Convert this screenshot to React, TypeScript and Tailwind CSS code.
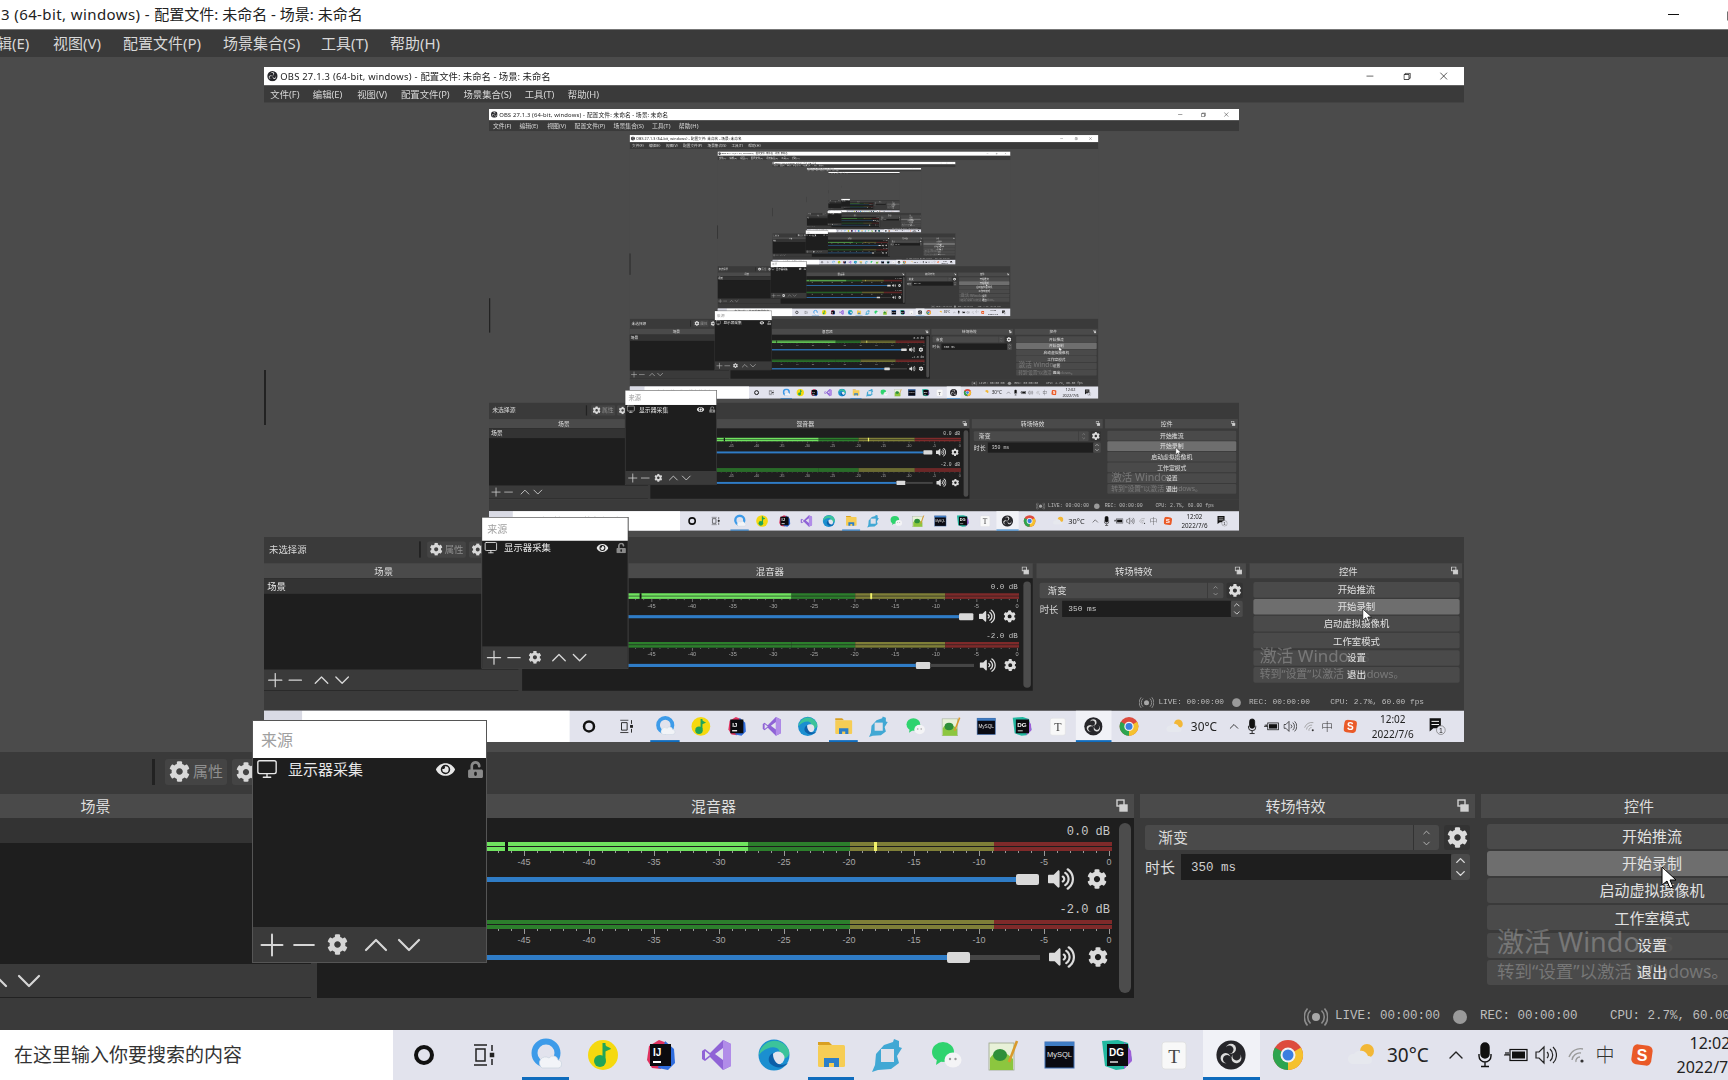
import { Plus, Minus, ChevronUp, ChevronDown, Monitor } from "lucide-react";
import { FaCog, FaVolumeUp, FaEye, FaUnlockAlt } from "react-icons/fa";

const MAX_DEPTH = 7;
const ui = "font-['Noto_Sans','Noto_Sans_CJK_SC',sans-serif]";
const mono = "font-['Liberation_Mono','Noto_Sans_CJK_SC',monospace]";

const menus = [
  { label: "文件(F)", w: "w-[68px]" },
  { label: "编辑(E)", w: "w-[71px]" },
  { label: "视图(V)", w: "w-[70px]" },
  { label: "配置文件(P)", w: "w-[100px]" },
  { label: "场景集合(S)", w: "w-[98px]" },
  { label: "工具(T)", w: "w-[69px]" },
  { label: "帮助(H)", w: "w-[70px]" },
];

const controls = ["开始推流", "开始录制", "启动虚拟摄像机", "工作室模式", "设置", "退出"];

function FloatIcon() {
  return (
    <svg width="12" height="14" viewBox="0 0 12 14" fill="none" stroke="#d0d0d0" strokeWidth="1.4">
      <rect x="1" y="1" width="7" height="6" />
      <rect x="4" y="6" width="7" height="6" fill="#d0d0d0" />
    </svg>
  );
}

function Header({ title }: { title: string }) {
  return (
    <div className="h-[24px] bg-[#4a4a4a] flex items-center text-[15px] text-[#dedede]">
      <div className="flex-1 text-center">{title}</div>
      <div className="w-[24px] flex justify-center">
        <FloatIcon />
      </div>
    </div>
  );
}

function MeterBar({ bright }: { bright?: boolean }) {
  const row = (
    <div className="flex h-[4px]">
      <div className={bright ? "w-[419px] bg-[#6fe35f]" : "w-[419px] bg-[#2c7f2c]"} />
      <div className="w-[102px] bg-[#2c7f2c]" />
      <div className="w-[144px] bg-[#7f7f38]" />
      <div className="w-[118px] bg-[#7f2a2a]" />
    </div>
  );
  return (
    <div className="relative h-[9px] w-[783px] flex flex-col gap-[1px]">
      {row}
      {row}
      {bright && <div className="absolute left-[176px] top-0 h-[9px] w-[3px] bg-[#111]" />}
      {bright && <div className="absolute left-[545px] top-0 h-[9px] w-[3px] bg-[#f2f26a]" />}
    </div>
  );
}

function Scale() {
  const ticks = Array.from({ length: 61 }, (_, i) => i);
  const labels = [60, 55, 50, 45, 40, 35, 30, 25, 20, 15, 10, 5, 0];
  return (
    <svg width="790" height="20" className="block">
      {ticks.map((i) => {
        const x = i * 13;
        return <line key={i} x1={x + 0.5} x2={x + 0.5} y1="0" y2={i % 5 === 0 ? 5 : 2} stroke="#9a9a9a" />;
      })}
      {labels.map((n) => (
        <text
          key={n}
          x={780 - n * 13}
          y="14"
          fontSize="9"
          fill="#a8a8a8"
          textAnchor="middle"
          fontFamily="'Liberation Sans', sans-serif"
        >
          {n === 0 ? "0" : `-${n}`}
        </text>
      ))}
    </svg>
  );
}

function Track({ label, bright, blue, rest }: { label: string; bright?: boolean; blue: string; rest: string }) {
  return (
    <div className="w-[783px]">
      <div className={`h-[20px] pr-[2px] text-right text-[12px] leading-[20px] text-[#c8c8c8] ${mono}`}>{label}</div>
      <MeterBar bright={bright} />
      <Scale />
      <div className="mt-[2px] flex h-[12px] items-center">
        <div className={`${blue} h-[5px] bg-[#2f7cc6]`} />
        <div className="h-[11px] w-[23px] rounded-[2px] bg-[#d9d9d9]" />
        <div className={`${rest} h-[5px] bg-[#454545]`} />
        <div className="flex w-[44px] justify-center text-[#dcdcdc]">
          <FaVolumeUp size={26} />
        </div>
        <div className="flex w-[28px] justify-center text-[#dcdcdc]">
          <FaCog size={20} />
        </div>
      </div>
    </div>
  );
}

function Toolbar({ gear }: { gear?: boolean }) {
  return (
    <div className="flex h-full items-center text-[#d6d6d6]">
      <div className="flex w-[32px] justify-center">
        <Plus size={36} strokeWidth={1.3} className="shrink-0" />
      </div>
      <div className="flex w-[32px] justify-center">
        <Minus size={34} strokeWidth={1.3} className="shrink-0" />
      </div>
      {gear && (
        <div className="flex w-[34px] justify-center">
          <FaCog size={21} />
        </div>
      )}
      <div className={gear ? "w-[4px]" : "w-[8px]"} />
      <div className="flex w-[36px] justify-center">
        <ChevronUp size={40} strokeWidth={1.3} className="shrink-0" />
      </div>
      <div className="flex w-[30px] justify-center">
        <ChevronDown size={40} strokeWidth={1.3} className="shrink-0" />
      </div>
    </div>
  );
}

function LiveIcon() {
  return (
    <svg width="24" height="22" viewBox="0 0 24 22" fill="none" stroke="#8c8c8c" strokeWidth="1.6">
      <circle cx="12" cy="11" r="4" fill="#a8a8a8" stroke="none" />
      <path d="M6.5 4.5a9 9 0 0 0 0 13M17.5 4.5a9 9 0 0 1 0 13M3.5 2.5a13 13 0 0 0 0 17M20.5 2.5a13 13 0 0 1 0 17" />
    </svg>
  );
}

function ObsLogo({ size }: { size: number }) {
  return (
    <svg width={size} height={size} viewBox="0 0 36 36">
      <circle cx="18" cy="18" r="17.5" fill="#26262a" />
      {[0, 120, 240].map((a) => (
        <g key={a} transform={`rotate(${a} 18 18)`}>
          <circle cx="18" cy="10.5" r="6" fill="#dcdcdc" />
          <circle cx="16" cy="11.5" r="5" fill="#26262a" />
        </g>
      ))}
    </svg>
  );
}

function Taskbar() {
  const apps = [
    { active: "w-[47px]", icon: (
      <svg width="34" height="34" viewBox="0 0 34 34">
        <circle cx="17" cy="15" r="11.5" fill="none" stroke="#3d9be9" strokeWidth="6" />
        <path d="M13 30h15a4 4 0 0 0 1-8 5 5 0 0 0-9-2 5 5 0 0 0-7 10z" fill="#f2f4f8" stroke="#c9d3de" strokeWidth=".7" />
      </svg>
    ) },
    { icon: (
      <svg width="34" height="34" viewBox="0 0 34 34">
        <circle cx="17" cy="17" r="15" fill="#f5d90f" />
        <path d="M18 5v17" stroke="#21a558" strokeWidth="3" />
        <circle cx="14" cy="23" r="6" fill="#21a558" />
        <path d="M18 5c1 4 6 4 7 6l-7 3z" fill="#21a558" />
      </svg>
    ) },
    { icon: (
      <svg width="34" height="34" viewBox="0 0 34 34">
        <path d="M6 8l10-6 8 3-6 26-9-1-5-8z" fill="#e0325f" />
        <path d="M22 3l9 8 1 14-7 7-10-2z" fill="#2f6dde" />
        <rect x="7" y="6" width="21" height="22" fill="#0b0b0f" />
        <text x="10" y="18" fontSize="10" fontWeight="700" fill="#fff" fontFamily="'Liberation Sans', sans-serif">IJ</text>
        <rect x="10" y="23" width="8" height="2" fill="#fff" />
      </svg>
    ) },
    { icon: (
      <svg width="34" height="34" viewBox="0 0 34 34">
        <path d="M23 2l8 4v22l-8 4-13-13-5 4-3-2v-8l3-2 5 4z" fill="#8f63d6" />
        <path d="M23 10l-8 6 8 6z" fill="#e3e4ee" />
        <path d="M5 13l5 4-5 4z" fill="#e3e4ee" />
        <path d="M23 2l8 4v22l-8 4z" fill="#b18ce8" />
      </svg>
    ) },
    { icon: (
      <svg width="34" height="34" viewBox="0 0 34 34">
        <circle cx="17" cy="17" r="15.5" fill="#1b8fd0" />
        <path d="M2 17A15.5 15.5 0 0 1 32 13c1 7-5 8-9 8h-7c0-5 8-5 6-9-3-5-14-3-20 5z" fill="#3cc39b" />
        <circle cx="21" cy="20" r="6.5" fill="#e3e4ee" />
        <path d="M16 15c-5 2-6 9-1 12 5 4 12 3 16-2-5 3-11 2-13-2-2-3-2-6-2-8z" fill="#0d5fa8" />
      </svg>
    ) },
    { active: "w-[46px]", icon: (
      <svg width="34" height="34" viewBox="0 0 34 34">
        <path d="M4 4h11l3 3h-14z" fill="#d9a021" />
        <rect x="4" y="7" width="27" height="22" rx="1.5" fill="#f6cd55" />
        <path d="M10 29v-9h15v9h-5v-4h-5v4z" fill="#2c7fc9" />
      </svg>
    ) },
    { icon: (
      <svg width="34" height="34" viewBox="0 0 34 34">
        <path d="M13 7l9-3 1-3 5 2v6l3 1-5 8 2 7-8 6-13 1-6 2 3-7 1-11z" fill="#41a8d4" />
        <rect x="10" y="11" width="13" height="13" fill="#dfe1ea" />
      </svg>
    ) },
    { icon: (
      <svg width="34" height="34" viewBox="0 0 34 34">
        <ellipse cx="14" cy="14" rx="11" ry="10" fill="#2fd36e" />
        <path d="M8 21l-1 6 6-4z" fill="#2fd36e" />
        <ellipse cx="24" cy="22" rx="8.5" ry="7.5" fill="#f4f4f6" />
        <circle cx="21" cy="21" r="1.2" fill="#9a9a9a" />
        <circle cx="26.5" cy="21" r="1.2" fill="#9a9a9a" />
      </svg>
    ) },
    { icon: (
      <svg width="34" height="34" viewBox="0 0 34 34">
        <rect x="3" y="5" width="25" height="27" fill="#e8f1d8" stroke="#9aa58a" strokeWidth=".8" />
        <path d="M4 32V20c7-9 12-9 23 1v11z" fill="#8cc63f" />
        <ellipse cx="14" cy="17" rx="7" ry="6" fill="#2f8f3a" />
        <path d="M23 24L31 3" stroke="#d99a2b" strokeWidth="2.5" />
      </svg>
    ) },
    { icon: (
      <svg width="34" height="34" viewBox="0 0 34 34">
        <rect x="2" y="4" width="29" height="26" fill="#0a0a12" stroke="#3f6fb3" strokeWidth="1" />
        <rect x="2" y="4" width="29" height="4" fill="#3f7cc4" />
        <text x="4" y="19" fontSize="7.5" fill="#e4e4e4" fontFamily="'Liberation Sans', sans-serif">MySQL</text>
      </svg>
    ) },
    { icon: (
      <svg width="34" height="34" viewBox="0 0 34 34">
        <path d="M2 3l16-1 10 3 4 17-8 9-8 1-11-4z" fill="#22b8a0" />
        <path d="M24 4l7 9 1 10-8 8z" fill="#9d5fd8" />
        <rect x="7" y="6" width="21" height="22" fill="#0b0b0f" />
        <text x="9" y="18" fontSize="10" fontWeight="700" fill="#fff" fontFamily="'Liberation Sans', sans-serif">DG</text>
        <rect x="10" y="23" width="8" height="2" fill="#aaaaaa" />
      </svg>
    ) },
    { icon: (
      <svg width="34" height="34" viewBox="0 0 34 34">
        <rect x="5" y="4" width="24" height="27" rx="3" fill="#f8f8f8" stroke="#dcdcdc" strokeWidth=".7" />
        <text x="17" y="25" fontSize="19" fill="#444" textAnchor="middle" fontFamily="'Liberation Serif', serif">T</text>
      </svg>
    ) },
    { active: "w-full", highlight: true, icon: <ObsLogo size={30} /> },
    { icon: (
      <svg width="34" height="34" viewBox="0 0 34 34">
        <circle cx="17" cy="17" r="15" fill="#dd4b3e" />
        <path d="M17 17L30 9.5A15 15 0 0 1 17 32z" fill="#f5c12e" />
        <path d="M17 17L17 32A15 15 0 0 1 4 9.5z" fill="#2da44e" />
        <circle cx="17" cy="17" r="7.5" fill="#f2f2f2" />
        <circle cx="17" cy="17" r="5.5" fill="#3b7ee0" />
      </svg>
    ) },
  ];
  return (
    <div className={`flex h-[50px] items-stretch bg-[#e2e3ed] ${ui}`}>
      <div className="w-[61px] bg-[#d9dae4]" />
      <div className="flex w-[428px] items-center bg-white pl-[49px] text-[19px] text-[#333]">在这里输入你要搜索的内容</div>
      <div className="flex w-[62px] items-center justify-center">
        <div className="h-[20px] w-[20px] rounded-full border-[4px] border-[#111]" />
      </div>
      <div className="flex w-[58px] items-center justify-center">
        <svg width="24" height="22" viewBox="0 0 24 22" fill="none" stroke="#222" strokeWidth="1.5">
          <path d="M2 1h13M2 21h13M4 5h9v12H4zM20 1v6M20 15v6" />
          <rect x="18.5" y="9.5" width="3" height="3" fill="#222" />
        </svg>
      </div>
      <div className="w-[4px]" />
      {apps.map((a, i) => (
        <div key={i} className={`relative flex w-[57.15px] items-center justify-center ${a.highlight ? "bg-[#f1f2f7]" : ""}`}>
          {a.icon}
          {a.active && <div className={`absolute bottom-0 h-[3px] bg-[#0f6cbd] ${a.active}`} />}
        </div>
      ))}
      <div className="w-[20px]" />
      <div className="flex w-[50px] items-center justify-center">
        <svg width="30" height="26" viewBox="0 0 30 26">
          <circle cx="20" cy="9" r="7" fill="#f2b736" />
          <path d="M5 22a5 5 0 0 1 2-10 8 8 0 0 1 14 2 4 4 0 0 1 0 8z" fill="#e6e8ee" />
        </svg>
      </div>
      <div className="flex w-[52px] items-center text-[19px] text-[#222]">30°C</div>
      <div className="flex w-[34px] items-center justify-center text-[#222]">
        <ChevronUp size={24} strokeWidth={1.4} />
      </div>
      <div className="flex w-[24px] items-center justify-center">
        <svg width="14" height="26" viewBox="0 0 14 26" fill="none" stroke="#111" strokeWidth="1.4">
          <rect x="3" y="1" width="8" height="15" rx="4" fill="#111" />
          <path d="M1 12v2a6 6 0 0 0 12 0v-2M7 20v4M3 24.5h8" />
        </svg>
      </div>
      <div className="flex w-[38px] items-center justify-center">
        <svg width="24" height="14" viewBox="0 0 24 14">
          <rect x="6" y="1.5" width="17" height="11" fill="none" stroke="#111" strokeWidth="1.2" />
          <rect x="8" y="3.5" width="13" height="7" fill="#111" />
          <path d="M0 7h6M2 4v3M4 4v3" stroke="#111" strokeWidth="1.2" />
        </svg>
      </div>
      <div className="flex w-[22px] items-center justify-center">
        <svg width="22" height="20" viewBox="0 0 22 20" fill="none" stroke="#222" strokeWidth="1.2">
          <path d="M1 7h3l5-5v16l-5-5H1zM12 7a4 4 0 0 1 0 6M15 4a8 8 0 0 1 0 12M18 2a11 11 0 0 1 0 16" />
        </svg>
      </div>
      <div className="flex w-[40px] items-center justify-center">
        <svg width="20" height="18" viewBox="0 0 20 18" fill="none" stroke="#9a9a9a" strokeWidth="1.3">
          <path d="M2 11a12 12 0 0 1 14-8M5 14a8 8 0 0 1 9-7M9 16a4 4 0 0 1 4-5" />
          <circle cx="15" cy="15" r="1.6" fill="#333" stroke="none" />
        </svg>
      </div>
      <div className="flex w-[16px] items-center justify-center text-[19px] font-light text-[#333]">中</div>
      <div className="flex w-[58px] items-center justify-center">
        <svg width="22" height="22" viewBox="0 0 22 22">
          <rect x="1" y="1" width="20" height="20" rx="5" fill="#ea5a28" transform="rotate(8 11 11)" />
          <text x="11" y="17" fontSize="16" fontWeight="700" fill="#fff" textAnchor="middle" fontFamily="'Liberation Sans', sans-serif">S</text>
        </svg>
      </div>
      <div className="flex w-[78px] flex-col items-center justify-center text-[16px] leading-[24px] text-[#222]">
        <div>12:02</div>
        <div>2022/7/6</div>
      </div>
      <div className="flex w-[64px] items-center justify-center">
        <svg width="28" height="30" viewBox="0 0 28 30">
          <path d="M2 2h18v16H8l-6 5z" fill="#111" />
          <path d="M5 7h12M5 12h12" stroke="#fff" strokeWidth="1.5" />
          <circle cx="20" cy="21" r="7" fill="#e2e3ed" stroke="#666" strokeWidth="1" />
          <text x="20" y="25" fontSize="11" fill="#222" textAnchor="middle" fontFamily="'Liberation Sans', sans-serif">1</text>
        </svg>
      </div>
    </div>
  );
}

function SourcePopup() {
  return (
    <div className={`absolute left-[348px] top-[720px] flex h-[243px] w-[235px] flex-col border border-[#555] bg-[#1e1e1e] ${ui}`}>
      <div className="flex h-[37px] items-center bg-white pl-[8px] text-[16px] text-[#a0a0a0]">来源</div>
      <div className="flex h-[22px] items-center text-[#e8e8e8]">
        <div className="flex w-[28px] justify-center">
          <Monitor size={22} strokeWidth={1.5} />
        </div>
        <div className="flex-1 pl-[7px] text-[15px]">显示器采集</div>
        <div className="flex w-[38px] justify-center">
          <FaEye size={19} />
        </div>
        <div className="flex w-[22px] justify-center text-[#8a8a8a]">
          <FaUnlockAlt size={17} />
        </div>
      </div>
      <div className="flex-1" />
      <div className="h-[35px] bg-[#3a3a3a] pl-[3px]">
        <Toolbar gear />
      </div>
    </div>
  );
}

function ObsScreen({ depth }: { depth: number }) {
  // the two largest captures look soft in the video, deeper ones are small enough already
  const soft = depth === 0 ? "blur-[0.4px]" : depth === 1 ? "blur-[0.6px]" : "";
  return (
    <div className={`relative flex h-[1080px] w-[1920px] flex-col overflow-hidden ${ui}`}>
      <div className="flex h-[29px] items-center bg-white text-[15px] text-[#222]">
        <div className="flex w-[26px] justify-center">
          <ObsLogo size={17} />
        </div>
        <div className="flex-1">
          <span className="tracking-[0.4px]">OBS 27.1.3 (64-bit, windows) - </span>配置文件: 未命名 - 场景: 未命名
        </div>
        <div className="flex w-[59px] justify-center">
          <div className="h-[1.5px] w-[11px] bg-[#111]" />
        </div>
        <div className="flex w-[59px] justify-center">
          <svg width="12" height="12" viewBox="0 0 12 12" fill="none" stroke="#111" strokeWidth="1.2">
            <path d="M1 3h8v8H1zM3 3V1h8v8H9" />
          </svg>
        </div>
        <div className="flex w-[59px] justify-center">
          <svg width="13" height="13" viewBox="0 0 13 13" stroke="#111" strokeWidth="1.1">
            <path d="M1 1l11 11M12 1L1 12" />
          </svg>
        </div>
        <div className="w-[3px]" />
      </div>
      <div className="flex h-[28px] items-center border-t border-[#777] bg-[#3a3a3a] pl-[10px] text-[15px] text-[#d8d8d8]">
        {menus.map((m) => (
          <div key={m.label} className={m.w}>
            {m.label}
          </div>
        ))}
      </div>

      {/* preview canvas, holds the capture of the same screen */}
      <div className="relative h-[695px] bg-[#4b4b4b]">
        {depth < MAX_DEPTH && (
          <div className={`absolute left-[360px] top-[9.5px] h-[1080px] w-[1920px] origin-top-left scale-[0.625] ${soft}`}>
            <ObsScreen depth={depth + 1} />
          </div>
        )}
        <div className="absolute left-[360px] top-[313px] h-[55px] w-[2px] bg-[#222]" />
      </div>

      <div className="flex h-[42px] items-center bg-[#3a3a3a] pb-[3px] text-[15px] text-[#d8d8d8]">
        <div className="w-[248px] pl-[8px]">未选择源</div>
        <div className="h-[26px] w-[3px] bg-[#222]" />
        <div className="ml-[10px] flex h-[26px] w-[62px] items-center gap-[3px] rounded-[3px] bg-[#444] pl-[4px]">
          <FaCog size={21} />
          <span className="text-[#8f8f8f]">属性</span>
        </div>
        <div className="ml-[5px] flex h-[26px] w-[40px] items-center rounded-[3px] bg-[#444] pl-[4px]">
          <FaCog size={20} />
        </div>
      </div>

      <div className="flex h-[206px] gap-[6px] bg-[#3a3a3a]">
        <div className="w-[407px]">
          <Header title="场景" />
          <div className="h-[146px] bg-[#1e1e1e]">
            <div className="flex h-[25px] items-center bg-[#333] pl-[5px] text-[15px] text-[#e8e8e8]">场景</div>
          </div>
          <div className="h-[34px] border-b border-[#222] pl-[2px]">
            <Toolbar />
          </div>
        </div>

        <div className="w-[817px]">
          <Header title="混音器" />
          <div className="flex h-[180px] bg-[#1e1e1e]">
            <div className="ml-[12px] mt-[4px] flex w-[783px] flex-col gap-[15px]">
              <Track label="0.0 dB" bright blue="w-[687px]" rest="w-0" />
              <Track label="-2.0 dB" blue="w-[618px]" rest="w-[70px]" />
            </div>
            <div className="ml-[7px] my-[5px] w-[12px] rounded-[6px] bg-[#4c4c4c]" />
          </div>
        </div>

        <div className="w-[335px]">
          <Header title="转场特效" />
          <div className="px-[5px] pt-[7px] text-[15px] text-[#dcdcdc]">
            <div className="flex h-[25px]">
              <div className="flex w-[294px] items-center rounded-[3px] bg-[#4a4a4a]">
                <div className="w-[268px] pl-[13px]">渐变</div>
                <div className="flex h-full flex-1 flex-col items-center justify-center border-l border-[#333] text-[#bbb]">
                  <ChevronUp size={11} />
                  <ChevronDown size={11} />
                </div>
              </div>
              <div className="ml-[5px] flex w-[26px] items-center justify-center rounded-[3px] bg-[#333]">
                <FaCog size={21} />
              </div>
            </div>
            <div className="mt-[4px] flex h-[26px] items-center">
              <div className="w-[36px]">时长</div>
              <div className={`flex h-full w-[271px] items-center bg-[#1e1e1e] pl-[10px] pt-[2px] text-[12.5px] text-[#cfcfcf] ${mono}`}>350 ms</div>
              <div className="flex h-full w-[19px] flex-col items-center justify-center rounded-[3px] bg-[#4a4a4a]">
                <ChevronUp size={15} strokeWidth={2.2} className="shrink-0 -mb-[2px]" />
                <ChevronDown size={15} strokeWidth={2.2} className="shrink-0" />
              </div>
            </div>
          </div>
        </div>

        <div className="w-[340px]">
          <Header title="控件" />
          <div className="flex flex-col gap-[2.3px] pl-[6px] pr-[4px] pt-[5.5px]">
            {controls.map((c) => (
              <div
                key={c}
                className={`flex h-[25px] items-center justify-center rounded-[3px] text-[15px] text-[#e2e2e2] ${
                  c === "开始录制" ? "bg-[#6e6e6e]" : "bg-[#4a4a4a]"
                }`}
              >
                {c}
              </div>
            ))}
          </div>
        </div>
      </div>

      <div className={`flex h-[30px] items-center justify-end whitespace-nowrap bg-[#3a3a3a] pr-[64px] pt-[3px] text-[12.5px] text-[#bdbdbd] ${mono}`}>
        <LiveIcon />
        <div className="ml-[7px] w-[105px]">LIVE: 00:00:00</div>
        <div className="ml-[13px] h-[14px] w-[14px] rounded-full bg-[#9a9a9a]" />
        <div className="ml-[13px] w-[105px]">REC: 00:00:00</div>
        <div className="ml-[25px] w-[150px]">CPU: 2.7%, 60.00 fps</div>
      </div>

      <Taskbar />

      <SourcePopup />

      {/* activation watermark sits on top of the controls dock */}
      <div className="pointer-events-none absolute left-[1593px] top-[925px] whitespace-nowrap text-white/25">
        <div className="text-[27px] leading-[34px]">
          激活 Windo<span className="text-white/5">ws</span>
        </div>
        <div className="text-[17.5px] leading-[24px]">转到“设置”以激活 Windows。</div>
      </div>

      <svg className="absolute left-[1757px] top-[866px]" width="16" height="24" viewBox="0 0 16 24">
        <path d="M1 1v18l5-4 3 7 3-1-3-7h6z" fill="#fff" stroke="#000" strokeWidth="1" />
      </svg>
    </div>
  );
}

export default function App() {
  return (
    <div className="h-[1080px] w-[1728px] overflow-hidden bg-[#3a3a3a]">
      <div className="-ml-[96px] w-[1920px]">
        <ObsScreen depth={0} />
      </div>
    </div>
  );
}
